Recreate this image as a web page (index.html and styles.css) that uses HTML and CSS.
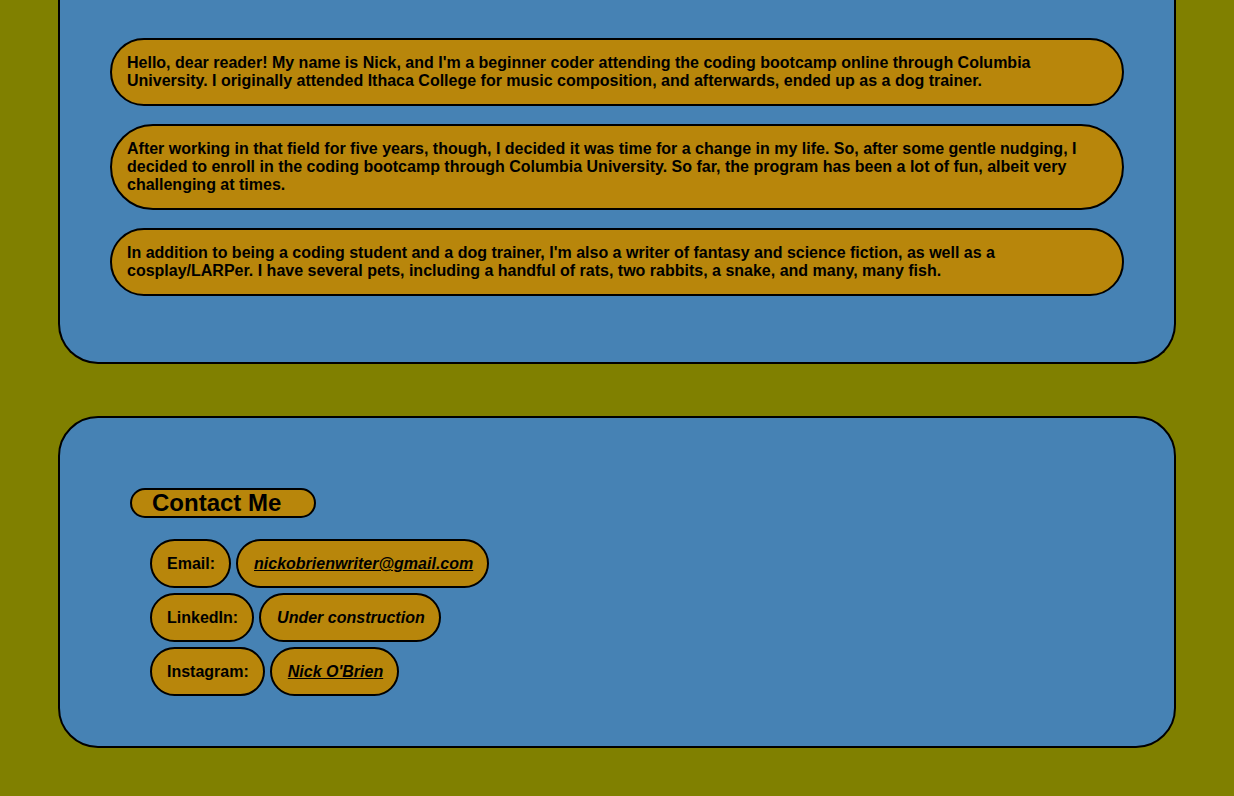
FILE: index.html
```html
<!DOCTYPE html>
<html lang="en">
<head>
<meta charset="utf-8">
<title>Nick O'Brien</title>
<link rel="stylesheet" href="styles.css">
</head>
<body>
<main class="page">
  <section class="panel about">
    <p class="pill para">Hello, dear reader! My name is Nick, and I'm a beginner coder attending the coding bootcamp online through Columbia University. I originally attended Ithaca College for music composition, and afterwards, ended up as a dog trainer.</p>
    <p class="pill para">After working in that field for five years, though, I decided it was time for a change in my life. So, after some gentle nudging, I decided to enroll in the coding bootcamp through Columbia University. So far, the program has been a lot of fun, albeit very challenging at times.</p>
    <p class="pill para">In addition to being a coding student and a dog trainer, I'm also a writer of fantasy and science fiction, as well as a cosplay/LARPer. I have several pets, including a handful of rats, two rabbits, a snake, and many, many fish.</p>
  </section>
  <section class="panel contact">
    <h2 class="pill heading">Contact Me</h2>
    <div class="rows">
      <div class="row"><span class="pill item">Email:</span><a class="pill item value link" href="#">nickobrienwriter@gmail.com</a></div>
      <div class="row"><span class="pill item">LinkedIn:</span><span class="pill item value">Under construction</span></div>
      <div class="row"><span class="pill item">Instagram:</span><a class="pill item value link" href="#">Nick O'Brien</a></div>
    </div>
  </section>
</main>
</body>
</html>
```
FILE: styles.css
```css
html, body {
  margin: 0;
  padding: 0;
}
body {
  background: #808000;
  font-family: "Liberation Sans", Arial, sans-serif;
  font-weight: bold;
  color: #000;
}
.page {
  display: flex;
  flex-direction: column;
  gap: 52px;
  padding: 0 58px 48px;
}
.panel {
  background: #4682b4;
  border: 2px solid #000;
  border-radius: 40px;
}
.about {
  border-top: none;
  border-radius: 0 0 40px 40px;
  padding: 38px 50px 66px;
  display: flex;
  flex-direction: column;
  gap: 18px;
}
.pill {
  background: #b8860b;
  border: 2px solid #000;
  border-radius: 999px;
}
.para {
  margin: 0;
  font-size: 16px;
  line-height: 18px;
  padding: 14px 15px;
}
.contact {
  padding: 70px 70px 50px;
}
.heading {
  display: inline-block;
  margin: 0;
  font-size: 24px;
  line-height: 26px;
  padding: 0 33px 0 20px;
}
.rows {
  margin-top: 21px;
  padding-left: 20px;
  display: flex;
  flex-direction: column;
  gap: 5px;
}
.row {
  display: flex;
  gap: 5px;
}
.item {
  font-size: 16px;
  line-height: 19px;
  padding: 13px 14px 13px 15px;
  color: #000;
}
.value {
  font-style: italic;
  padding: 13px 14px 13px 16px;
}
.link {
  text-decoration: underline;
}
```
